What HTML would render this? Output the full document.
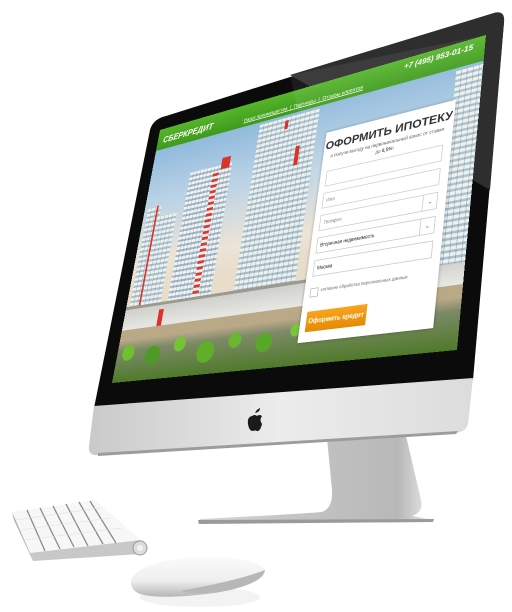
<!DOCTYPE html>
<html><head><meta charset="utf-8">
<style>
html,body{margin:0;padding:0;background:#fff;}
body{width:512px;height:612px;position:relative;overflow:hidden;font-family:"Liberation Sans",sans-serif;}
#svg{position:absolute;left:0;top:0;}
#scr{position:absolute;left:0;top:0;width:480px;height:360px;transform-origin:0 0;
transform:matrix3d(0.472208,-0.212813,0,-0.00042583,-0.155806,0.625917,0,-0.00020069,0,0,1,0,160,130,0,1);
overflow:hidden;background:linear-gradient(#7fb0d8 0%,#b9d2e6 30%,#ece4d6 55%,#e8dccb 65%);}
.a{position:absolute;}
.hdr{left:0;top:0;width:480px;height:32px;background:linear-gradient(#55b52a,#3f9a1c);}
.logo{left:10px;top:10px;color:#fff;font-weight:bold;font-style:italic;font-size:13px;}
.nav{left:150px;top:20px;color:#fff;font-size:7px;text-decoration:underline;white-space:nowrap;}
.ph{left:380px;top:6px;color:#fff;font-size:10px;font-style:italic;font-weight:bold;}
.tw{background:repeating-linear-gradient(90deg,transparent 0 5px,rgba(90,110,130,.35) 5px 6px),repeating-linear-gradient(#f3f3ef 0 4px,#9fb8cc 4px 7px);}
.tw2{background:repeating-linear-gradient(90deg,transparent 0 6px,rgba(60,90,130,.3) 6px 7px),repeating-linear-gradient(#eef0ea 0 4px,#a8c0d0 4px 7px);}
.red{background:#d8342a;}
.form{left:283px;top:72px;width:168px;height:262px;background:#fff;box-shadow:0 0 4px rgba(0,0,0,.3);}
.t{left:0;width:168px;top:10px;text-align:center;font-weight:bold;font-size:15px;color:#222;}
.st{left:6px;width:156px;top:30px;text-align:center;font-size:6px;color:#555;line-height:9px;}
.in{left:8px;width:150px;height:20px;border:1px solid #ccc;font-size:6px;color:#888;line-height:20px;padding-left:4px;box-sizing:border-box;}
.dd{position:absolute;right:0;top:0;width:16px;height:18px;border-left:1px solid #ccc;text-align:center;font-size:7px;color:#555;}
.btn{left:8px;top:226px;width:78px;height:24px;background:linear-gradient(#f7a51c,#e58a06);color:#fff;font-weight:bold;font-size:8px;line-height:24px;text-align:center;}
.trees{background:
radial-gradient(circle at 4% 45%,#6fbf2e 0 10px,transparent 11px),
radial-gradient(circle at 13% 55%,#4f9a26 0 12px,transparent 13px),
radial-gradient(circle at 22% 40%,#74c235 0 9px,transparent 10px),
radial-gradient(circle at 31% 60%,#5fb028 0 13px,transparent 14px),
radial-gradient(circle at 40% 45%,#6bb62f 0 9px,transparent 10px),
radial-gradient(circle at 49% 55%,#58a82a 0 11px,transparent 12px),
radial-gradient(circle at 58% 40%,#7ac63a 0 7px,transparent 8px),
radial-gradient(circle at 68% 45%,#6bb62f 0 6px,transparent 7px),
radial-gradient(circle at 78% 40%,#6bb62f 0 5px,transparent 6px),
radial-gradient(circle at 88% 40%,#6bb62f 0 5px,transparent 6px),
linear-gradient(#b9a987 0 20%,#7d8a68 40%,#4f7a2a);}
</style></head><body>
<svg id="svg" width="512" height="612" viewBox="0 0 512 612">
<defs>
<linearGradient id="sil" x1="0" y1="0" x2="1" y2="0"><stop offset="0" stop-color="#c9c9c9"/><stop offset=".5" stop-color="#ececec"/><stop offset="1" stop-color="#dcdcdc"/></linearGradient>
<linearGradient id="st" x1="0" y1="0" x2="1" y2="0"><stop offset="0" stop-color="#d8d8d8"/><stop offset=".4" stop-color="#c4c4c4"/><stop offset=".85" stop-color="#b8b8b8"/><stop offset="1" stop-color="#eee"/></linearGradient>
<linearGradient id="ms" x1="0" y1="0" x2="0" y2="1"><stop offset="0" stop-color="#fbfbfb"/><stop offset=".6" stop-color="#eee"/><stop offset="1" stop-color="#b5b5b5"/></linearGradient>
</defs>
<path d="M327,438 L406,436 Q414,470 421,500 Q424,512 412,516 L434,520 L198,523 L200,519 Q300,514 322,512 Q333,508 332,490 Z" fill="url(#st)"/>
<path d="M198,520 L434,519 L433,522 L199,524Z" fill="#9a9a9a"/>
<path d="M166,116 L494,13 Q505,10 504,22 L473,380 L94,408 L150,130 Q153,119 166,116Z" fill="#0b0b0b"/>
<path d="M290,75 L494,13 Q505,10 504,22 L490,190 Z" fill="#2e2e2e"/>
<path d="M94,406 L473,378 L468,424 Q466,432 455,433 L98,455 Q88,456 89,446 Z" fill="url(#sil)"/>
<path d="M98,453 L458,431 L456,434 L98,456Z" fill="#9c9c9c"/>
<path d="M255,413 Q257,409 260,408 Q260,412 255,413Z M252,416 Q255,414 257,416 Q259,414 262,416 Q259,420 262,424 Q260,432 257,431 Q255,430 253,431 Q249,431 248,424 Q247,417 252,416Z" fill="#1a1a1a"/>
<path d="M12,512 L95,500 L141,540 L30,553Z" fill="#f7f7f7"/>
<path d="M30,553 L141,540 L141,554 L33,561 Z" fill="#c8c8c8"/>
<path d="M12,512 L30,553 L33,561 L14,520Z" fill="#aaa"/>
<g stroke="#8a8a8a" stroke-width="1.3">
<line x1="27" y1="510" x2="45" y2="551"/><line x1="40" y1="508" x2="60" y2="549"/><line x1="53" y1="506" x2="74" y2="547"/><line x1="66" y1="504" x2="88" y2="546"/><line x1="79" y1="502" x2="103" y2="544"/><line x1="90" y1="501" x2="116" y2="543"/>
</g>
<g stroke="#ddd" stroke-width=".6"><line x1="16" y1="520" x2="100" y2="508"/><line x1="20" y1="530" x2="110" y2="518"/><line x1="24" y1="540" x2="122" y2="528"/></g>
<circle cx="140" cy="548" r="7" fill="#ddd" stroke="#999"/>
<circle cx="140" cy="548" r="3" fill="#f2f2f2"/>
<ellipse cx="200" cy="597" rx="60" ry="10" fill="#f3f3f3"/>
<path d="M131,580 Q140,560 200,557 Q255,556 265,570 Q262,585 215,593 Q160,600 140,594 Q130,590 131,580Z" fill="url(#ms)"/>
<path d="M180,591 Q240,580 265,570 Q264,582 230,590 Q200,596 180,591Z" fill="#b7b7b7"/>
</svg>
<div id="scr">
 <div class="a tw2" style="left:6px;top:120px;width:24px;height:150px;background-color:#6d96c0"></div>
 <div class="a tw2" style="left:26px;top:135px;width:34px;height:135px;"></div>
 <div class="a red" style="left:22px;top:118px;width:3px;height:140px;"></div>
 <div class="a tw" style="left:72px;top:80px;width:70px;height:190px;"></div>
 <div class="a red" style="left:124px;top:70px;width:14px;height:16px;"></div>
 <div class="a" style="left:112px;top:90px;width:10px;height:170px;background:repeating-linear-gradient(#d83a30 0 4px,#eee 4px 8px)"></div>
 <div class="a tw2" style="left:178px;top:36px;width:90px;height:236px;"></div>
 <div class="a red" style="left:218px;top:40px;width:5px;height:12px;"></div>
 <div class="a red" style="left:240px;top:80px;width:6px;height:26px;"></div>
 <div class="a" style="left:0;top:262px;width:480px;height:30px;background:linear-gradient(#cfd0cc,#e9e9e5);"></div>
 <div class="a" style="left:0;top:258px;width:480px;height:4px;background:#9a9a90;"></div>
 <div class="a red" style="left:60px;top:268px;width:8px;height:30px;"></div>
 <div class="a trees" style="left:0;top:290px;width:480px;height:70px;"></div>
 <div class="a tw2" style="left:448px;top:36px;width:32px;height:230px;"></div>
 <div class="a hdr"></div>
 <div class="a logo">СБЕРКРЕДИТ</div>
 <div class="a nav">Наши преимущества &nbsp;|&nbsp; Партнеры &nbsp;|&nbsp; Отзывы клиентов</div>
 <div class="a ph">+7 (495) 953-01-15</div>
 <div class="a form">
  <div class="a t">ОФОРМИТЬ ИПОТЕКУ</div>
  <div class="a st">и получи выгоду на первоначальный взнос от ставки<br>до <b>6,5%</b>!</div>
  <div class="a in" style="top:52px"></div>
  <div class="a in" style="top:80px">Имя</div>
  <div class="a in" style="top:108px;font-style:italic">Телефон<span class="dd">⌄</span></div>
  <div class="a in" style="top:136px;color:#222">Вторичная недвижимость<span class="dd">⌄</span></div>
  <div class="a in" style="top:164px;color:#222">Москва</div>
  <div class="a" style="left:8px;top:198px;width:9px;height:9px;border:1px solid #bbb;"></div>
  <div class="a" style="left:22px;top:199px;font-size:5.5px;color:#666;">согласие обработка персональных данных</div>
  <div class="a btn">Оформить кредит</div>
 </div>
</div>
<svg width="512" height="612" style="position:absolute;left:0;top:0;pointer-events:none"><path d="M290,75 L486,35 L470,200 L320,215Z" fill="#fff" opacity="0.07"/></svg>
</body></html>
